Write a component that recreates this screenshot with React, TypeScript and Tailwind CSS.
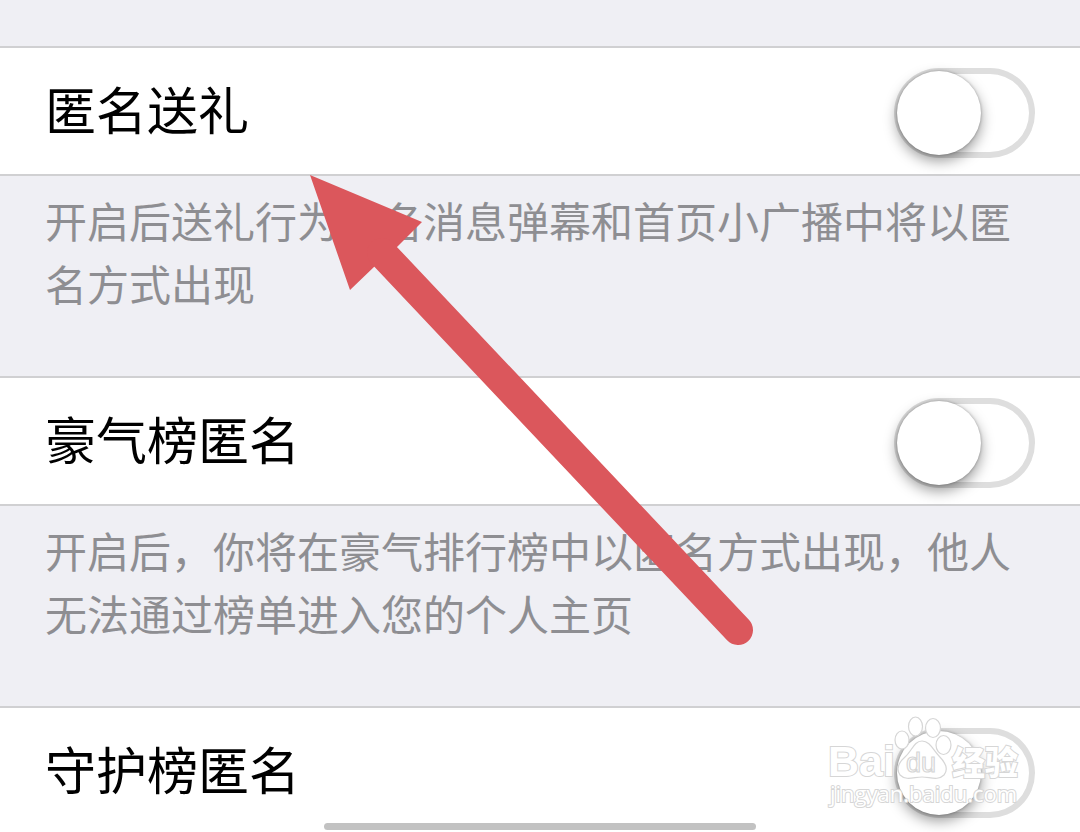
import React from 'react';

interface Setting {
  id: string;
  title: string;
  description?: string;
}

const settings: Setting[] = [
  {
    id: 'anonymous-gift',
    title: '匿名送礼',
    description: '开启后送礼行为匿名消息弹幕和首页小广播中将以匿名方式出现',
  },
  {
    id: 'rich-list',
    title: '豪气榜匿名',
    description: '开启后，你将在豪气排行榜中以匿名方式出现，他人无法通过榜单进入您的个人主页',
  },
  { id: 'guard-list', title: '守护榜匿名' },
];

function SettingRow({ id, title, description }: Setting) {
  return (
    <section className="group">
      <div className="flex items-center justify-between border-y-2 border-[#d0d0d2] bg-white pt-5 pb-4 pl-[45px] pr-[45px] group-last:border-b-0 group-last:pb-3.5">
        <label htmlFor={id} className="text-[51px] leading-[84px] text-black">
          {title}
        </label>
        <input
          id={id}
          type="checkbox"
          role="switch"
          className="h-[90px] w-[141px] shrink-0 appearance-none rounded-full bg-white p-[3px] shadow-[inset_0_0_0_6px_#dedede] before:block before:size-[84px] before:rounded-full before:bg-white before:shadow-[0_0_3px_rgba(0,0,0,0.3),0_6px_14px_rgba(0,0,0,0.4)] before:content-[''] checked:bg-green-500 checked:before:ml-auto"
        />
      </div>
      {description && (
        <p className="px-[45px] pt-4 pb-[58px] text-[42px] leading-[63px] text-[#8e8e92]">{description}</p>
      )}
    </section>
  );
}

function Arrow() {
  return (
    <svg className="absolute left-[310px] top-[175px]" width="444" height="470" viewBox="310 175 444 470" fill="#db575c" aria-hidden="true">
      <path d="M310 175 L422 222 L397 247 L386 257 L375 266 L350 290 Z" />
      <path d="M382 253 L738 630" stroke="#db575c" strokeWidth="30" strokeLinecap="round" />
    </svg>
  );
}

function Watermark() {
  return (
    <svg
      className="absolute bottom-4 right-14"
      width="200"
      height="104"
      viewBox="824 712 200 104"
      fill="#ffffff"
      stroke="#d6d6d6"
      strokeWidth="1.2"
      fontFamily="Liberation Sans, Noto Sans CJK SC, sans-serif"
      aria-label="Baidu 经验"
    >
      <text x="828" y="776" fontSize="43" fontWeight="700" strokeWidth="2" paintOrder="stroke">Bai</text>
      <ellipse cx="902" cy="740" rx="7" ry="9" />
      <ellipse cx="915.5" cy="726.5" rx="7" ry="9.5" />
      <ellipse cx="933" cy="728" rx="7.5" ry="9.5" />
      <ellipse cx="943.5" cy="745" rx="7.5" ry="9.5" />
      <path d="M922 741 C930 741 933 750 939 756 C946 763 949 769 944 775 C938 781 930 777 922 777 C914 777 906 781 900 775 C896 769 898 763 905 757 C912 751 914 741 922 741 Z" />
      <text x="906" y="772" fontSize="27" strokeWidth="1.2">du</text>
      <text x="952" y="775" fontSize="33" fontWeight="900" strokeWidth="2" paintOrder="stroke">经验</text>
      <text x="830" y="802" fontSize="22" fontFamily="Open Sans, sans-serif" strokeWidth="2" paintOrder="stroke">jingyan.baidu.com</text>
    </svg>
  );
}

export default function App() {
  return (
    <div className="relative min-h-screen overflow-hidden bg-[#efeff4] pt-[46px] font-['Liberation_Sans','Noto_Sans_CJK_SC',sans-serif]" lang="zh-CN">
      <main>
        {settings.map((setting) => (
          <SettingRow key={setting.id} {...setting} />
        ))}
      </main>
      <Arrow />
      <Watermark />
      <div className="absolute inset-x-0 bottom-0 flex justify-center pb-0.5">
        <div className="h-[7px] w-2/5 rounded-full bg-[#c2c2c2]" />
      </div>
    </div>
  );
}
